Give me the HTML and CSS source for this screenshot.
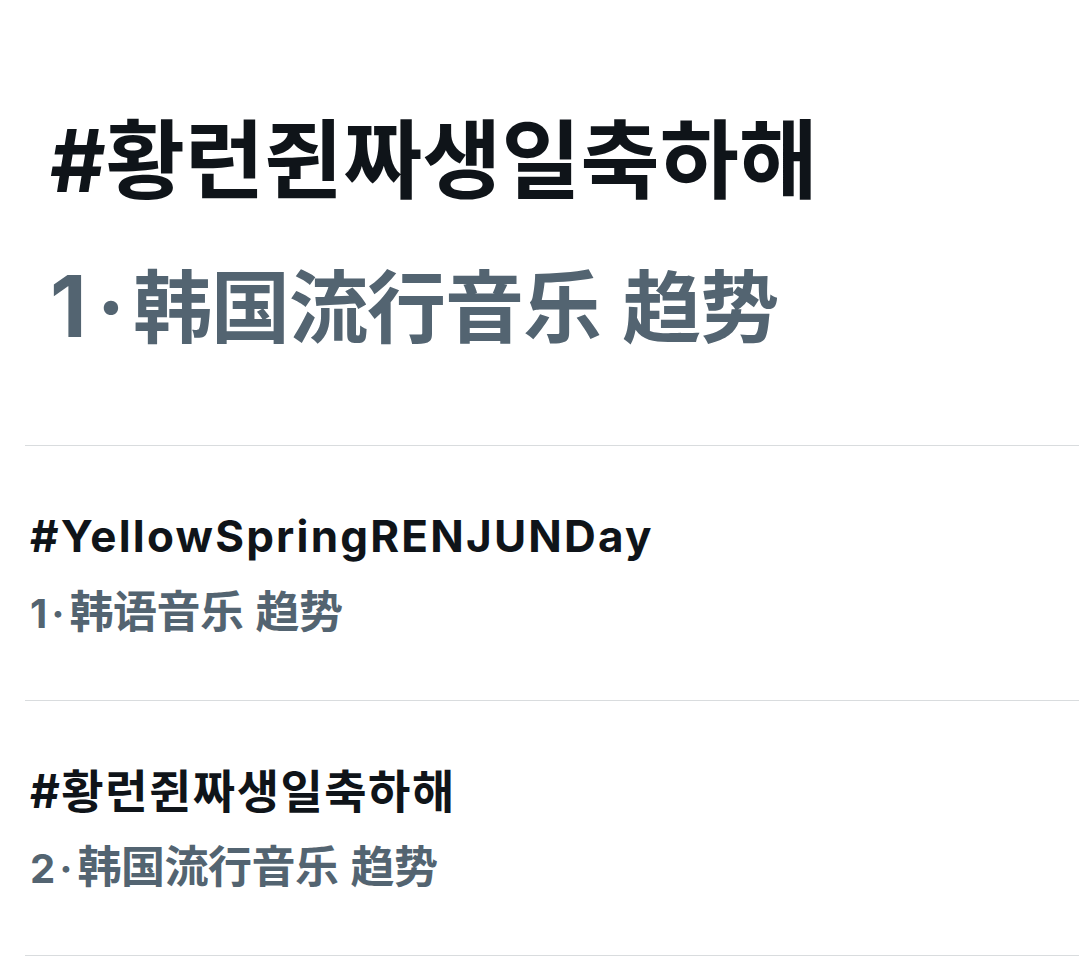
FILE: index.html
```html
<!DOCTYPE html>
<html lang="ko">
<head>
<meta charset="utf-8">
<title>Trends</title>
<link rel="stylesheet" href="styles.css">
</head>
<body>
<main class="page">
  <header class="hero">
    <h1 class="hero-title">#황런쥔짜생일축하해</h1>
    <p class="hero-meta"><span class="num">1</span><span class="dot">·</span><span class="cjk">韩国流行音乐 趋势</span></p>
  </header>
  <ul class="trends">
    <li class="trend">
      <div class="trend-title">#YellowSpringRENJUNDay</div>
      <div class="trend-meta"><span class="num">1</span><span class="dot">·</span><span class="cjk">韩语音乐 趋势</span></div>
    </li>
    <li class="trend">
      <div class="trend-title ko">#황런쥔짜생일축하해</div>
      <div class="trend-meta"><span class="num">2</span><span class="dot">·</span><span class="cjk">韩国流行音乐 趋势</span></div>
    </li>
    <li class="trend-end"></li>
  </ul>
</main>
</body>
</html>
```

FILE: styles.css
```css
html, body {
  margin: 0;
  padding: 0;
  background: #ffffff;
}

body {
  font-family: Inter, "Noto Sans CJK KR", "Noto Sans CJK SC", sans-serif;
  color: #0f1419;
}

.page {
  width: 1079px;
  height: 960px;
  overflow: hidden;
}

.hero {
  padding: 111px 0 0 50px;
  height: 445px;
  box-sizing: border-box;
}

.hero-title {
  margin: 0;
  font-size: 86px;
  line-height: 100px;
  font-weight: 700;
  letter-spacing: 0;
  color: #0f1419;
}

.hero-meta {
  margin: 47px 0 0 0;
  font-size: 85px;
  line-height: 90px;
  font-weight: 700;
  color: #536471;
  display: flex;
  align-items: baseline;
}

.hero-meta .dot {
  padding: 0 8px 0 10px;
}

.hero-meta .cjk {
  font-family: "Noto Sans CJK SC", sans-serif;
  font-size: 79px;
  letter-spacing: -1px;
}

.trends {
  list-style: none;
  margin: 0 0 0 25px;
  padding: 0;
}

.trend {
  border-top: 1px solid #d9dcde;
  height: 255px;
  box-sizing: border-box;
  padding: 64px 0 0 5px;
}

.trend-title {
  font-size: 44px;
  line-height: 52px;
  font-weight: 700;
  letter-spacing: 2.2px;
  color: #0f1419;
}

.trend-title.ko {
  font-size: 46px;
  letter-spacing: 1.5px;
}

.trend-meta {
  margin-top: 23px;
  font-size: 40px;
  line-height: 48px;
  font-weight: 700;
  color: #536471;
  display: flex;
  align-items: baseline;
}

.trend-meta .dot {
  padding: 0 5px 0 4px;
}

.trend-meta .cjk {
  font-family: "Noto Sans CJK SC", sans-serif;
  font-size: 44px;
  letter-spacing: -0.5px;
}

.trend-end {
  border-top: 1px solid #d9dcde;
  height: 5px;
}
```
